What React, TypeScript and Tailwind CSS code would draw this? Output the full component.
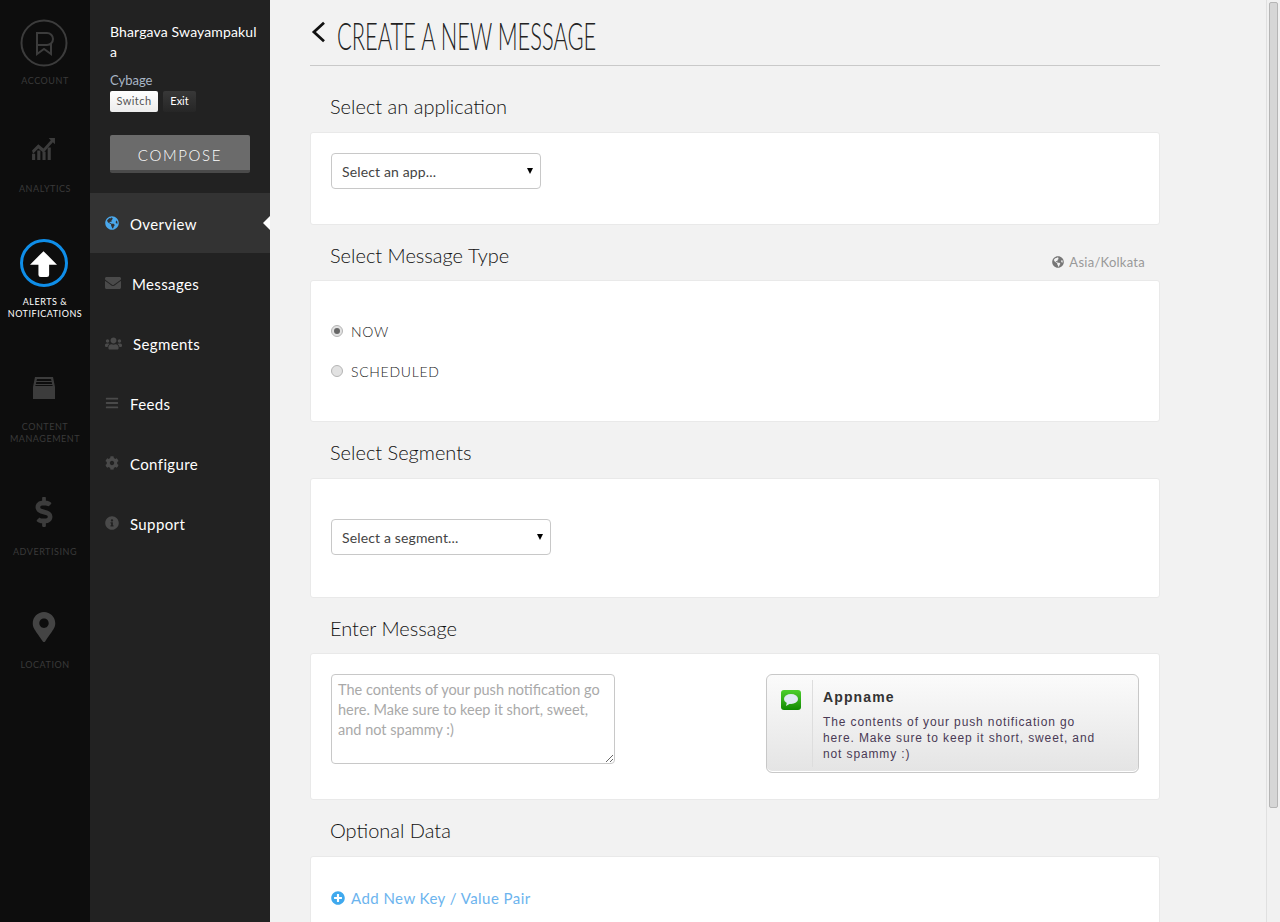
import { ReactNode } from "react";
import { FaBars, FaCog, FaDollarSign, FaEnvelope, FaGlobeAmericas, FaInfoCircle, FaMapMarkerAlt, FaPlusCircle, FaUsers } from "react-icons/fa";

function RailItem({ label, icon, active, className, labelClass }: { label: ReactNode; icon: ReactNode; active?: boolean; className: string; labelClass: string }) {
  return (
    <div className={`flex flex-col items-center ${className}`}>
      <div className="-ml-[3px] flex h-12 w-12 items-center justify-center">{icon}</div>
      <p className={`text-center text-[9px] leading-3 tracking-[0.06em] ${labelClass} ${active ? "text-white" : "text-[#3a3a3a]"}`}>{label}</p>
    </div>
  );
}

function NavItem({ icon, label, active }: { icon: ReactNode; label: string; active?: boolean }) {
  return (
    <div className={`relative flex h-[60px] items-center gap-[11px] pl-[15px] ${active ? "bg-[#333333]" : ""}`}>
      {icon}
      <span className="pt-[2px] text-[15px] tracking-[0.025em] text-white">{label}</span>
      {active ? <span className="absolute right-0 top-[23px] h-0 w-0 border-y-[7px] border-r-[7px] border-y-transparent border-r-white" /> : null}
    </div>
  );
}

function Heading({ children, right, className }: { children: ReactNode; right?: ReactNode; className: string }) {
  return (
    <div className={`flex items-end justify-between pl-5 pr-[15px] ${className}`}>
      <h2 className="text-[20px] font-light leading-7 text-[#111111]">{children}</h2>
      {right}
    </div>
  );
}

function Card({ children, className }: { children: ReactNode; className: string }) {
  return <div className={`rounded-[3px] border border-[#e9e9e9] bg-white pl-5 ${className}`}>{children}</div>;
}

function FakeSelect({ label, width }: { label: string; width: string }) {
  return (
    <div className={`flex h-9 items-center justify-between rounded-[4px] border border-[#c8c8c8] bg-white pl-[10px] pr-[7px] text-[14px] tracking-[0.01em] text-[#444444] ${width}`}>
      <span>{label}</span>
      <span className="h-0 w-0 border-x-[3px] border-t-[6px] border-x-transparent border-t-black" />
    </div>
  );
}

function Radio({ label, checked }: { label: string; checked?: boolean }) {
  return (
    <div className="flex h-10 items-center gap-2">
      <span className="flex h-3 w-3 items-center justify-center rounded-full border border-[#b5b5b5] bg-[#e2e2e2]">
        {checked ? <span className="h-1.5 w-1.5 rounded-full bg-[#666666]" /> : null}
      </span>
      <span className="text-[14px] font-light tracking-[0.05em] text-[#222222]">{label}</span>
    </div>
  );
}

export default function App() {
  return (
    <div className="flex h-[922px] w-[1280px] overflow-hidden bg-[#f2f2f2] font-['Lato',sans-serif]">
      <aside className="flex w-[90px] shrink-0 flex-col bg-[#0d0d0d]">
        <RailItem
          className="mt-[19px]"
          labelClass="mt-2"
          label="ACCOUNT"
          icon={
            <svg viewBox="0 0 48 48" className="h-12 w-12" fill="none" stroke="#3c3c3c">
              <circle cx="24" cy="24" r="22.500" strokeWidth="2" />
              <path d="M17 26h10a6 6 0 0 0 0-12H17v21l7-5 7 5V24" strokeWidth="2" />
            </svg>
          }
        />
        <RailItem
          className="mt-[37px]"
          labelClass="mt-[11px]"
          label="ANALYTICS"
          icon={
            <svg viewBox="0 0 24 24" className="h-[25px] w-[25px]" fill="#3c3c3c">
              <path d="M1 17h3v6H1zM6 14h3v9H6zM11 15h3v8h-3zM16 11h3v12h-3z" />
              <path d="M1 14l6-6 5 4 7-8-2-2h6v6l-2-2-9 10-5-4-5 5z" />
            </svg>
          }
        />
        <RailItem
          className="mt-[44px]"
          labelClass="mt-[9px]"
          active
          label={<>ALERTS &amp;<br />NOTIFICATIONS</>}
          icon={
            <div className="flex h-12 w-12 items-center justify-center rounded-full border-[3px] border-[#0f8ee9]">
              <svg viewBox="0 0 24 24" className="h-[27px] w-[27px]" fill="white">
                <path d="M12 1 24 13h-7v9a2 2 0 0 1-2 2H9.500a2 2 0 0 1-2-2v-9H0z" />
              </svg>
            </div>
          }
        />
        <RailItem
          className="mt-[44px]"
          labelClass="mt-[9px]"
          label={<>CONTENT<br />MANAGEMENT</>}
          icon={
            <svg viewBox="0 0 24 24" className="h-6 w-6" fill="#3c3c3c">
              <path d="M3 1h18l2 10v12H1V11zM5 3l-.5 2h15L19 3zM4.300 6l-.4 2h16.200l-.4-2zM3.600 9l-.3 1h17.400l-.3-1z" fillRule="evenodd" />
            </svg>
          }
        />
        <RailItem className="mt-[43px]" labelClass="mt-[10px]" label="ADVERTISING" icon={<FaDollarSign className="h-[30px] w-[30px] text-[#3c3c3c]" />} />
        <RailItem className="mt-[45px]" labelClass="mt-2" label="LOCATION" icon={<FaMapMarkerAlt className="h-[30px] w-[30px] text-[#444444]" />} />
      </aside>

      <aside className="w-[180px] shrink-0 bg-[#222222]">
        <div className="pl-5 pt-[22px]">
          <p className="w-[150px] break-all text-[14px] leading-5 tracking-[0.01em] text-white">Bhargava Swayampakula</p>
          <p className="mt-2 text-[13px] leading-5 text-[#a9b6c6]">Cybage</p>
          <div className="mt-px flex gap-[5px]">
            <button className="h-[21px] w-12 rounded-[2px] bg-gradient-to-b from-white to-[#ececec] text-[11px] tracking-[0.04em] text-[#555555]">Switch</button>
            <button className="h-[21px] w-[33px] rounded-[2px] bg-gradient-to-b from-[#383838] to-[#262626] text-[11px] text-white">Exit</button>
          </div>
          <button className="mt-[23px] h-[38px] w-[140px] rounded-[2px] border-b-[3px] border-[#4a4a4a] bg-[#6b6b6b] pt-[5px] text-[15px] font-light tracking-[0.11em] text-white">COMPOSE</button>
        </div>
        <nav className="mt-5">
          <NavItem active label="Overview" icon={<FaGlobeAmericas className="h-[14px] w-[14px] text-[#4aa8ec]" />} />
          <NavItem label="Messages" icon={<FaEnvelope className="h-4 w-4 text-[#4a4a4a]" />} />
          <NavItem label="Segments" icon={<FaUsers className="h-[17px] w-[17px] text-[#4a4a4a]" />} />
          <NavItem label="Feeds" icon={<FaBars className="h-[14px] w-[14px] text-[#4a4a4a]" />} />
          <NavItem label="Configure" icon={<FaCog className="h-[14px] w-[14px] text-[#4a4a4a]" />} />
          <NavItem label="Support" icon={<FaInfoCircle className="h-[14px] w-[14px] text-[#4a4a4a]" />} />
        </nav>
      </aside>

      <main className="w-[890px] shrink-0 pl-10">
        <div className="w-[850px]">
          <div className="flex h-[66px] items-center border-b border-[#c9c9c9] pb-[2px]">
            <svg viewBox="0 0 16 24" className="ml-px h-[22px] w-[15px] shrink-0" fill="none" stroke="#111111" strokeWidth="3">
              <path d="M14 2 3 12l11 10" />
            </svg>
            <h1 className="ml-[11px] mt-[6px] shrink-0 origin-left scale-x-[0.576] whitespace-nowrap text-[38px] font-light leading-10 text-[#222222]">CREATE A NEW MESSAGE</h1>
          </div>

          <Heading className="h-[66px] pb-3">Select an application</Heading>
          <Card className="h-[93px] pt-5">
            <FakeSelect label="Select an app..." width="w-[210px]" />
          </Card>

          <Heading
            className="h-[55px] pb-[11px]"
            right={
              <span className="-mb-[3px] flex items-center gap-[5px] text-[13px] tracking-[0.02em] text-[#999999]">
                <FaGlobeAmericas className="h-3 w-3 text-[#777777]" />
                Asia/Kolkata
              </span>
            }
          >
            Select Message Type
          </Heading>
          <Card className="h-[142px] pt-[30px]">
            <Radio checked label="NOW" />
            <Radio label="SCHEDULED" />
          </Card>

          <Heading className="h-[56px] pb-3">Select Segments</Heading>
          <Card className="h-[120px] pt-10">
            <FakeSelect label="Select a segment..." width="w-[220px]" />
          </Card>

          <Heading className="h-[55px] pb-[11px]">Enter Message</Heading>
          <Card className="flex h-[147px] justify-between pr-5 pt-5">
            <textarea
              readOnly
              placeholder="The contents of your push notification go here. Make sure to keep it short, sweet, and not spammy :)"
              className="h-[90px] w-[284px] rounded-[4px] border border-[#c8c8c8] px-[6px] py-[5px] text-[14.5px] leading-5 text-[#333333] placeholder:text-[#a9a9a9]"
            />
            <div className="flex h-[99px] w-[373px] rounded-[6px] border border-[#c8c8c8] bg-gradient-to-b from-[#fbfbfb] to-[#e4e4e4] font-['Liberation_Sans',sans-serif] shadow-[inset_0_-1px_0_#ffffff]">
              <div className="my-[5px] w-[46px] border-r border-[#dddddd] pl-[14px] pt-[10px]">
                <div className="flex h-5 w-5 items-center justify-center rounded-[3px] bg-gradient-to-b from-[#4cd02c] to-[#0c8a00]">
                  <svg viewBox="0 0 20 20" className="h-5 w-5">
                    <ellipse cx="10" cy="9" rx="7" ry="5" fill="#dfeaf2" />
                    <path d="M6 12 5 16l5-3z" fill="#dfeaf2" />
                  </svg>
                </div>
              </div>
              <div className="pl-[10px] pt-[14px]">
                <p className="text-[14px] font-bold leading-4 tracking-[0.08em] text-[#333333]">Appname</p>
                <p className="mt-[9px] w-[280px] text-[12px] leading-4 tracking-[0.073em] text-[#4a3a55]">The contents of your push notification go here. Make sure to keep it short, sweet, and not spammy :)</p>
              </div>
            </div>
          </Card>

          <Heading className="h-[56px] pb-3">Optional Data</Heading>
          <Card className="h-[120px] pt-[30px]">
            <div className="flex items-center gap-[6px] text-[15px] tracking-[0.03em] text-[#6cb4ee]">
              <FaPlusCircle className="h-[14px] w-[14px] text-[#3fa9ee]" />
              Add New Key / Value Pair
            </div>
          </Card>
        </div>
      </main>

      <div className="ml-auto flex w-[14px] flex-col border-l border-[#e0e0e0] bg-[#f1f1f1] px-[2px] pt-[2px]">
        <div className="h-[806px] rounded-[2px] border border-[#b5b5b5] bg-[#d6d6d6]" />
      </div>
    </div>
  );
}
